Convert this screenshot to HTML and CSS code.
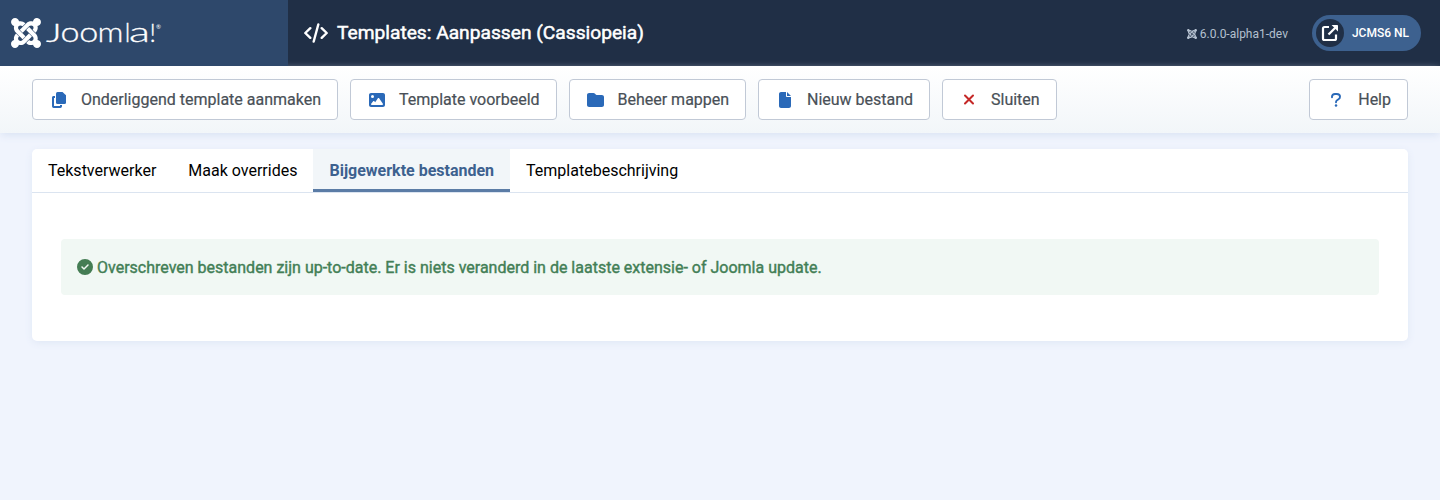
FILE: index.html
```html
<!DOCTYPE html>
<html lang="nl">
<head>
<meta charset="utf-8">
<title>Templates: Aanpassen (Cassiopeia)</title>
<link rel="stylesheet" href="styles.css">
</head>
<body>
<svg width="0" height="0" class="sprite">
  <symbol id="joomla" viewBox="0 32 448 448"><path d="M.6 92.1C.6 58.8 27.4 32 60.4 32c30 0 54.5 21.9 59.2 50.2 32.6-7.6 67.1.6 96.5 30l-44.3 44.3c-20.5-20.5-42.6-16.3-55.4-3.5-14.3 14.3-14.3 37.9 0 52.2l99.5 99.5-44 44.3c-87.7-87.2-49.7-49.7-99.8-99.7-26.8-26.5-35-64.8-24.8-98.9C20.4 144.6.6 120.7.6 92.1zm129.5 116.4l44.3 44.3c10-10 89.7-89.7 99.7-99.8 14.3-14.3 37.6-14.3 51.9 0 12.8 12.8 17 35-3.5 55.4l44 44.3c31.2-31.2 38.5-67.6 28.9-101.2 29.2-4.1 51.9-29.2 51.9-59.5 0-33.2-26.8-60.1-59.8-60.1-30.3 0-55.4 22.5-59.5 51.6-33.8-9.9-71.7-1.5-98.3 25.1-18.3 19.1-71.1 71.5-99.6 99.9zm266.3 152.2c8.2-32.7-.9-68.5-26.3-93.9-11.8-12.2 5 4.7-99.5-99.7l-44.3 44.3 99.7 99.7c14.3 14.3 14.3 37.6 0 51.9-12.8 12.8-35 17-55.4-3.5l-44 44.3c27.6 30.2 68 38.8 102.7 28 5.5 27.4 29.7 48.1 58.9 48.1 33 0 59.8-26.8 59.8-60.1 0-30.2-22.5-55-51.6-59.1zm-84.3-53.1l-44-44.3c-87 86.4-50.4 50.4-99.7 99.8-14.3 14.3-37.6 14.3-51.9 0-13.1-13.4-16.9-35.3 3.2-55.4l-44-44.3c-30.2 30.2-38 65.2-29.5 98.3-26.7 6-46.2 29.9-46.2 58.2C0 453.2 26.8 480 59.8 480c28.6 0 52.5-19.8 58.6-46.7 32.7 8.2 68.5-.6 94.2-26 32.1-32 12.2-12.4 99.5-99.7z"/></symbol>
</svg>
<header class="header">
  <div class="logo">
    <svg class="logo-mark"><use href="#joomla"/></svg>
    <svg class="logo-word" width="118" height="30" viewBox="0 0 118 30">
      <g class="word">
        <text transform="translate(0 24) scale(1.500 1)">J</text>
        <text class="round" transform="translate(14.600 24) scale(1.220 1)">o</text>
        <text class="round" transform="translate(33.200 24) scale(1.220 1)">o</text>
        <text class="round" transform="translate(51.500 24) scale(1.150 1)">m</text>
        <text transform="translate(78.700 24)">l</text>
        <text class="round" transform="translate(83 24) scale(1.550 1)">a</text>
        <text transform="translate(103.500 24)">!</text>
      </g>
      <text x="110" y="11" class="reg">®</text>
    </svg>
  </div>
  <div class="header-main">
    <svg class="code" width="24" height="20" viewBox="0 0 24 20"><path d="M6.300 5.200L1.300 10l5 4.800M17.700 5.200l5 4.800-5 4.800M14.300 1.500L9.700 18.500"/></svg>
    <h1 class="title">Templates: Aanpassen (Cassiopeia)</h1>
    <div class="version"><svg width="10" height="10"><use href="#joomla"/></svg>6.0.0-alpha1-dev</div>
    <a class="site-link"><span class="site-icon"><svg width="18" height="18" viewBox="0 0 18 18"><path class="box" d="M8 3H3.500Q2 3 2 4.500V14.500Q2 16 3.500 16H13.500Q15 16 15 14.500V10.500"/><path class="box" d="M7.500 10.500L14.300 3.700"/><path class="tip" d="M10.600 1h5.600q.8 0 .8.800v5.600z"/></svg></span>JCMS6 NL</a>
  </div>
</header>
<nav class="toolbar">
  <button class="btn"><span class="icon"><svg width="16" height="16" viewBox="0 0 16 16"><path d="M6.500 0H11.500L15 3.300V10.500Q15 12 13.500 12H6.500Q5 12 5 10.500V1.500Q5 0 6.500 0z"/><path d="M2.300 4H4V6H3V14H9V13H11V14.200Q11 16 9.300 16H2.700Q1 16 1 14.300V5.500Q1 4 2.300 4z"/></svg></span>Onderliggend template aanmaken</button>
  <button class="btn"><span class="icon"><svg width="16" height="16" viewBox="0 0 512 512"><path d="M0 96C0 60.700 28.700 32 64 32H448c35.300 0 64 28.700 64 64V416c0 35.300-28.700 64-64 64H64c-35.300 0-64-28.700-64-64V96zM323.800 202.500c-4.500-6.600-11.900-10.500-19.800-10.500s-15.400 3.900-19.800 10.500l-87 127.600L170.700 297c-4.600-5.700-11.500-9-18.700-9s-14.200 3.300-18.700 9l-64 80c-5.800 7.200-6.900 17.100-2.900 25.400s12.400 13.600 21.600 13.600h336c8.900 0 17.100-4.900 21.200-12.800s3.600-17.400-1.400-24.700l-120-176zM112 192a48 48 0 1 0 0-96 48 48 0 1 0 0 96z"/></svg></span>Template voorbeeld</button>
  <button class="btn"><span class="icon"><svg width="17" height="16" viewBox="0 0 512 512" preserveAspectRatio="none"><path d="M64 480H448c35.300 0 64-28.700 64-64V160c0-35.300-28.700-64-64-64H288c-10.100 0-19.600-4.700-25.600-12.800L243.200 57.600C231.100 41.500 212.100 32 192 32H64C28.700 32 0 60.700 0 96V416c0 35.300 28.700 64 64 64z"/></svg></span>Beheer mappen</button>
  <button class="btn"><span class="icon"><svg width="12" height="16" viewBox="0 0 384 512"><path d="M0 64C0 28.700 28.700 0 64 0H224V128c0 17.700 14.300 32 32 32H384V448c0 35.300-28.700 64-64 64H64c-35.300 0-64-28.700-64-64V64zm384 64H256V0L384 128z"/></svg></span>Nieuw bestand</button>
  <button class="btn"><span class="icon close"><svg width="12" height="12" viewBox="0 0 12 12"><path d="M2 1.500l8 8M10 1.500l-8 8"/></svg></span>Sluiten</button>
  <button class="btn help"><span class="icon question"><svg width="10" height="14" viewBox="0 0 10 14"><path d="M1 4.300V3.800Q1 1 4 1H5.800Q9 1 9 3.700Q9 5.300 7.500 6.200L6 7.200Q5 7.800 5 9.300"/><circle cx="5" cy="12.500" r="1.250"/></svg></span>Help</button>
</nav>
<main class="card">
  <div class="tabs">
    <a class="tab">Tekstverwerker</a>
    <a class="tab">Maak overrides</a>
    <a class="tab active">Bijgewerkte bestanden</a>
    <a class="tab">Templatebeschrijving</a>
  </div>
  <div class="alert"><svg width="16" height="16" viewBox="0 0 512 512"><path d="M256 512A256 256 0 1 0 256 0a256 256 0 1 0 0 512zM369 209L241 337c-9.400 9.400-24.600 9.400-33.900 0l-64-64c-9.400-9.400-9.400-24.600 0-33.900s24.600-9.400 33.900 0l47 47L335 175c9.400-9.400 24.600-9.400 33.900 0s9.400 24.600 0 33.900z"/></svg><span class="alert-text">Overschreven bestanden zijn up-to-date. Er is niets veranderd in de laatste extensie- of Joomla update.</span></div>
</main>
</body>
</html>
```
FILE: styles.css
```css
* { box-sizing: border-box; }
body { margin: 0; height: 500px; background: #f0f4fd; font: 400 16px/24px Roboto, sans-serif; overflow: hidden; }
.sprite { display: block; }
svg { flex: none; display: block; }
.header { display: flex; height: 66px; background: #202f46; color: #fff; }
.logo { width: 288px; padding: 0 0 0 11px; display: flex; align-items: center; background: #2e486b; fill: #fff; }
.logo-mark { width: 30px; height: 30px; }
.logo-word { margin-left: 5px; overflow: visible; }
.word { font: 300 25px Lato, sans-serif; stroke: #fff; stroke-width: .3px; }
.round { font-size: 28px; }
.reg { font: 400 6px Lato, sans-serif; }
.header-main { flex: 1; display: flex; align-items: center; padding: 0 19px 0 16px; }
.code { fill: none; stroke: #fff; stroke-width: 2.4; stroke-linecap: round; stroke-linejoin: round; }
.title { margin: 0 auto 0 9px; font-size: 19.2px; font-weight: 400; line-height: 24px; -webkit-text-stroke: .5px #fff; }
.version { display: flex; align-items: center; gap: 3px; padding-top: 1px; font-size: 12px; color: #b4c0cf; fill: #b4c0cf; margin-right: 24px; }
.site-link { display: flex; align-items: center; gap: 8px; height: 36px; padding: 0 12px 0 4px; border-radius: 18px; background: #3d618f; font-size: 12px; font-weight: 500; }
.site-icon { display: flex; align-items: center; justify-content: center; width: 28px; height: 28px; border-radius: 50%; background: #202f46; }
.box { fill: none; stroke: #fff; stroke-width: 2.2; }
.tip { fill: #fff; }
.toolbar { display: flex; align-items: center; gap: 12px; height: 67px; padding: 0 32px; background: linear-gradient(#fff, #f2f6f9); box-shadow: 0 3px 8px -1px #d8e2f2; }
.btn { display: flex; align-items: center; height: 41px; padding: 0 15.95px 0 15.93px; border: 1px solid #c1c9d6; border-radius: 4px; background: #fff; color: #495057; font: 400 16px/24px Roboto, sans-serif; white-space: nowrap; -webkit-text-stroke: .2px #495057; }
.icon { display: flex; justify-content: center; width: 20px; margin-right: 12px; fill: #2a69b8; }
.close { fill: none; stroke: #c52827; stroke-width: 2; stroke-linecap: round; }
.question path { fill: none; stroke: #2a69b8; stroke-width: 1.9; stroke-linecap: round; }
.help { margin-left: auto; padding: 0 16px; }
.card { margin: 16px 32px 0; height: 192px; background: #fff; border-radius: 5px; box-shadow: 0 2px 8px -1px #dce5f4; }
.tabs { display: flex; height: 44px; border-bottom: 1px solid #dbe4f0; color: #000; border-radius: 5px 5px 0 0; }
.tab { padding: 10px 16px 0; }
.active { color: #3d618f; font-weight: 700; background: #f2f6f9; border-bottom: 3px solid #5b7ca6; }
.alert { display: flex; align-items: center; gap: 4px; margin: 46px 29px 0; height: 56px; padding: 0 16px; border-radius: 4px; background: #f1f8f4; color: #437f56; fill: #457d54; }
.alert-text { padding-top: 1px; -webkit-text-stroke: .4px #437f56; }
```
